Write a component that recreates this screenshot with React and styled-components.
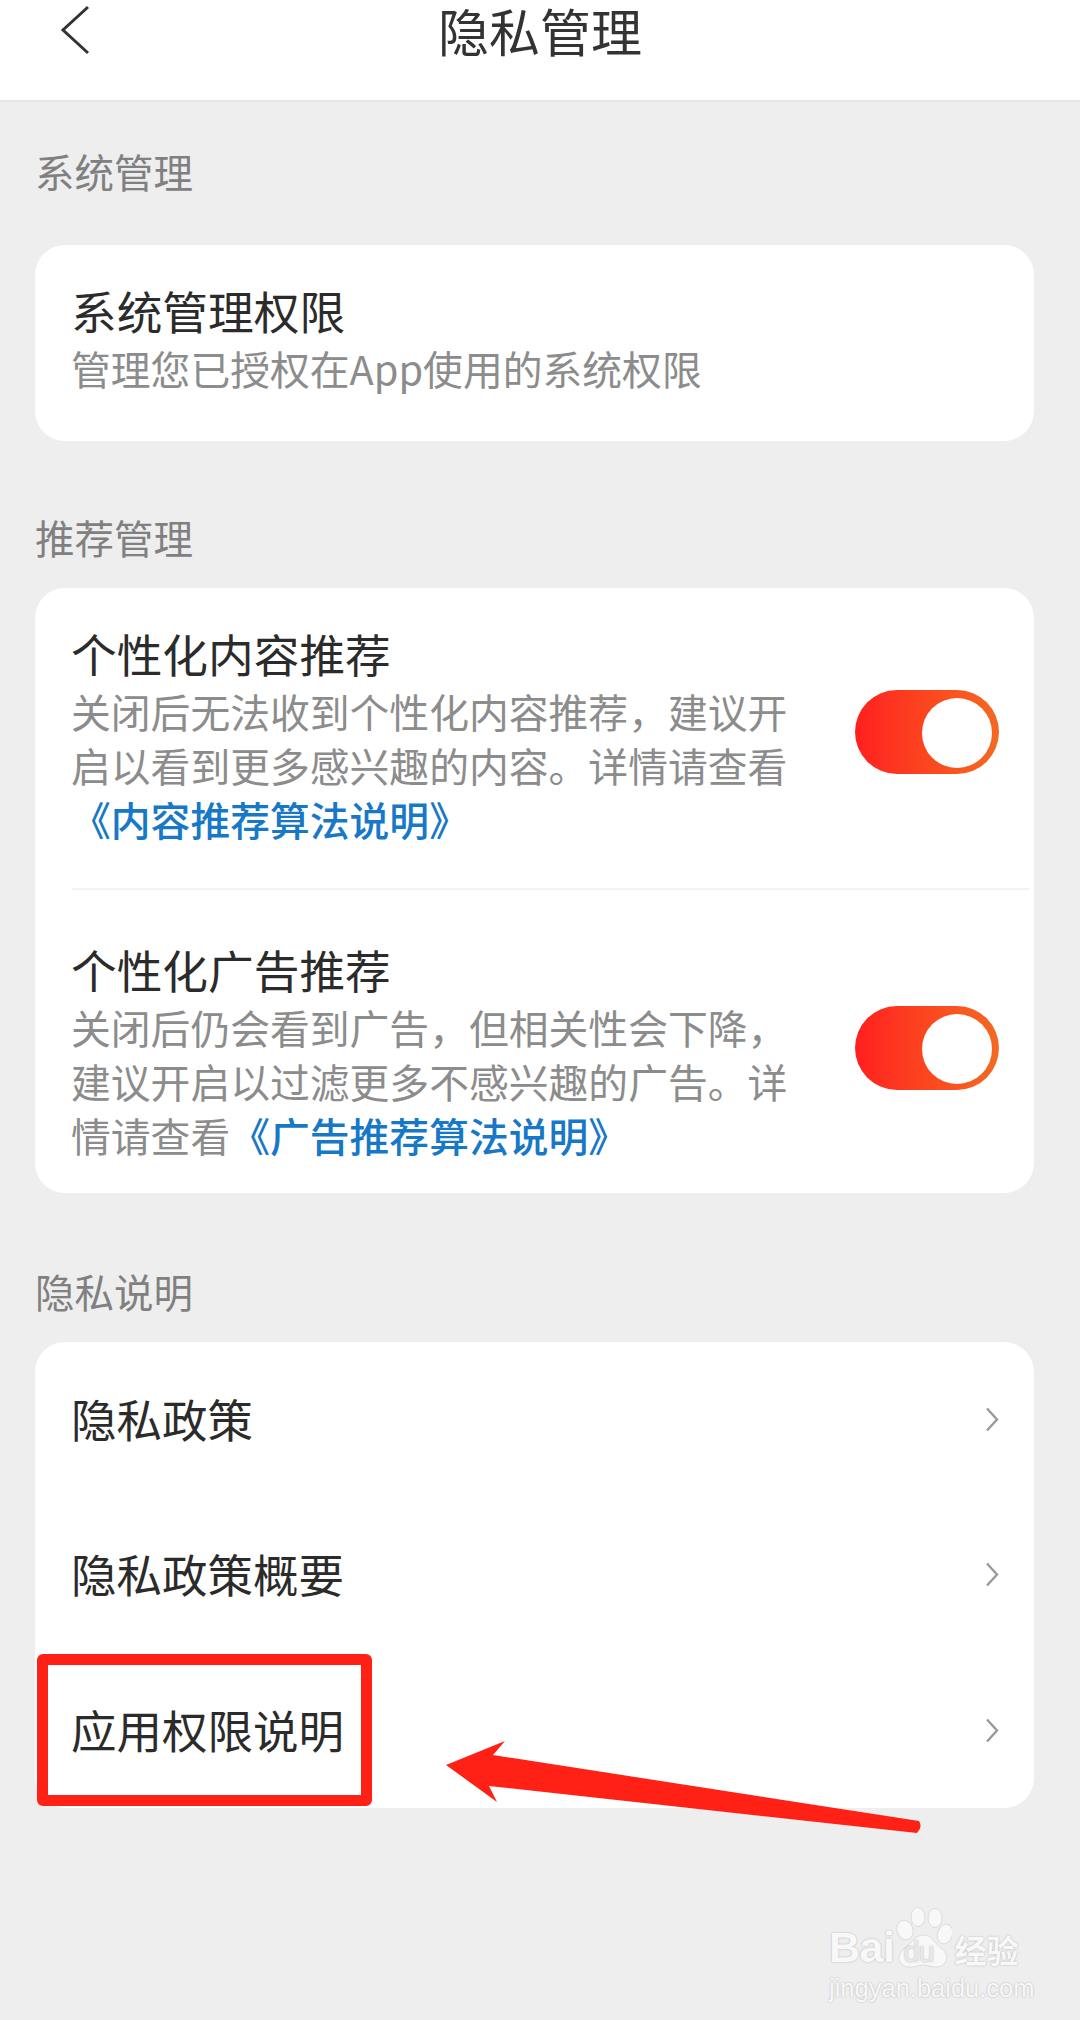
import React from "react";
import styled, { createGlobalStyle } from "styled-components";

const CJK = `"Noto Sans CJK SC", "Noto Sans", sans-serif`;

const Global = createGlobalStyle`
  html, body {
    margin: 0;
    padding: 0;
    background: #eeeeee;
  }
  body {
    font-family: ${CJK};
  }
`;

const Page = styled.div`
  position: relative;
  width: 1080px;
  height: 2020px;
  overflow: hidden;
  background: #eeeeee;
`;

const Header = styled.header`
  position: relative;
  height: 102px;
  background: #fff;
  border-bottom: 2px solid #e6e6e6;
  box-sizing: border-box;
  display: flex;
  justify-content: center;
`;

const BackIcon = styled.svg`
  position: absolute;
  left: 60px;
  top: 5px;
`;

const Title = styled.h1`
  margin: 0;
  font-size: 51px;
  font-weight: 400;
  line-height: 60px;
  color: #333;
`;

const Section = styled.section`
  margin-top: ${(p) => p.$top}px;
  padding: 0 46px 0 35px;
`;

const Label = styled.div`
  margin-bottom: ${(p) => p.$gap}px;
  font-size: 39.5px;
  line-height: 48px;
  color: #808080;
`;

const Card = styled.div`
  background: #fff;
  border-radius: 30px;
  height: ${(p) => p.$height}px;
  box-sizing: border-box;
  display: flex;
  flex-direction: column;
`;

const ToggleRow = styled.div`
  display: flex;
  align-items: center;
  justify-content: space-between;
  padding: ${(p) => (p.$second ? "52px 35px 31px 36px" : "38px 35px 42px 36px")};
`;

const TextBlock = styled.div`
  width: ${(p) => p.$width || 725}px;
`;

const RowTitle = styled.div`
  font-size: 45.7px;
  line-height: 54px;
  color: #2b2b2b;
`;

const Desc = styled.div`
  margin-top: 4px;
  font-size: 39.8px;
  line-height: 54px;
  color: #8c8c8c;
`;

const Link = styled.span`
  display: inline-block;
  color: #1778c8;
  font-weight: 500;
`;

const Divider = styled.div`
  height: 2px;
  margin: 0 5px 0 37px;
  background: #f4f4f4;
`;

const Track = styled.div`
  position: relative;
  flex: none;
  width: 144px;
  height: 84px;
  margin-top: -8px;
  border-radius: 42px;
  background: linear-gradient(90deg, #ff2020 0%, #fb4a1f 55%, #f36a22 100%);
`;

const Knob = styled.div`
  position: absolute;
  right: 7px;
  top: 8px;
  width: 70px;
  height: 70px;
  border-radius: 50%;
  background: #fff;
`;

const LinkRow = styled.div`
  flex: 1;
  display: flex;
  align-items: center;
  justify-content: space-between;
  padding: 0 35px 3px 36px;
  font-size: 45.5px;
  color: #2b2b2b;
`;

const Chevron = styled.svg`
  flex: none;
  margin-top: 3px;
`;

/* red annotations pasted over the screenshot */
const RedBox = styled.div`
  position: absolute;
  left: 37px;
  top: 1654px;
  width: 335px;
  height: 152px;
  box-sizing: border-box;
  border: 11px solid #ff2116;
  border-radius: 6px;
`;

const Arrow = styled.svg`
  position: absolute;
  left: 0;
  top: 1700px;
`;

const Watermark = styled.div`
  position: absolute;
  left: 829px;
  top: 1903px;
  width: 200px;
  color: #f8f8f8;
  text-shadow: 0 0 2px rgba(0, 0, 0, 0.28);
`;

const MarkTop = styled.div`
  display: flex;
  align-items: flex-end;
  height: 66px;
`;

const Bai = styled.span`
  font-family: "Liberation Sans", sans-serif;
  font-weight: 700;
  font-size: 43px;
  line-height: 44px;
  letter-spacing: -0.5px;
`;

const Paw = styled.div`
  position: relative;
  width: 58px;
  height: 62px;
`;

const Du = styled.span`
  position: absolute;
  left: 9px;
  bottom: 2px;
  font-family: "Liberation Sans", sans-serif;
  font-size: 29px;
  line-height: 30px;
  letter-spacing: -1px;
  color: #e9e9e9;
`;

const Jing = styled.span`
  font-weight: 700;
  font-size: 32px;
  line-height: 40px;
  margin-left: 2px;
`;

const MarkUrl = styled.div`
  margin-top: 4px;
  font-family: "Liberation Sans", sans-serif;
  font-size: 25.5px;
  line-height: 30px;
  white-space: nowrap;
`;

function ToggleSwitch() {
  return (
    <Track>
      <Knob />
    </Track>
  );
}

function RowChevron() {
  return (
    <Chevron width="14" height="25" viewBox="0 0 14 25" fill="none">
      <path d="M2 1.5 L12 12.5 L2 23.5" stroke="#9a9a9a" strokeWidth="2.4" />
    </Chevron>
  );
}

export default function App() {
  return (
    <Page>
      <Global />
      <Header>
        <BackIcon width="32" height="52" viewBox="0 0 32 52" fill="none">
          <path d="M28 2 L3 25 L28 48" stroke="#333" strokeWidth="3" />
        </BackIcon>
        <Title>隐私管理</Title>
      </Header>

      <Section $top={45}>
        <Label $gap={50}>系统管理</Label>
        <Card $height={196}>
          <ToggleRow>
            <TextBlock $width={900}>
              <RowTitle>系统管理权限</RowTitle>
              <Desc>管理您已授权在App使用的系统权限</Desc>
            </TextBlock>
          </ToggleRow>
        </Card>
      </Section>

      <Section $top={72}>
        <Label $gap={27}>推荐管理</Label>
        <Card $height={605}>
          <ToggleRow>
            <TextBlock>
              <RowTitle>个性化内容推荐</RowTitle>
              <Desc>
                关闭后无法收到个性化内容推荐，建议开启以看到更多感兴趣的内容。详情请查看
                <Link>《内容推荐算法说明》</Link>
              </Desc>
            </TextBlock>
            <ToggleSwitch />
          </ToggleRow>
          <Divider />
          <ToggleRow $second>
            <TextBlock>
              <RowTitle>个性化广告推荐</RowTitle>
              <Desc>
                关闭后仍会看到广告，但相关性会下降，建议开启以过滤更多不感兴趣的广告。详情请查看
                <Link>《广告推荐算法说明》</Link>
              </Desc>
            </TextBlock>
            <ToggleSwitch />
          </ToggleRow>
        </Card>
      </Section>

      <Section $top={74}>
        <Label $gap={27}>隐私说明</Label>
        <Card $height={466}>
          <LinkRow>
            隐私政策
            <RowChevron />
          </LinkRow>
          <LinkRow>
            隐私政策概要
            <RowChevron />
          </LinkRow>
          <LinkRow>
            应用权限说明
            <RowChevron />
          </LinkRow>
        </Card>
      </Section>

      <RedBox />
      <Arrow width="1080" height="150" viewBox="0 1700 1080 150">
        <path
          d="M446 1765 L505 1741 L493 1755 L919 1821 Q923 1827 917 1833 L489 1786 L497 1802 Z"
          fill="#ff2116"
        />
      </Arrow>

      <Watermark>
        <MarkTop>
          <Bai>Bai</Bai>
          <Paw>
            <svg width="58" height="62" viewBox="0 0 58 62">
              <g fill="#f8f8f8" stroke="#dcdcdc" strokeWidth="1">
                <ellipse cx="11" cy="23" rx="8" ry="10" transform="rotate(-20 11 23)" />
                <ellipse cx="24" cy="10" rx="7" ry="9.5" />
                <ellipse cx="41" cy="11" rx="7" ry="9.5" />
                <ellipse cx="51" cy="27" rx="7.5" ry="10" transform="rotate(18 51 27)" />
                <path d="M30 28 C38 28 40 36 48 42 C57 49 52 60 42 60 C36 60 34 58 29 58 C24 58 20 61 13 60 C4 58 2 48 10 42 C18 36 21 28 30 28 Z" />
              </g>
            </svg>
            <Du>du</Du>
          </Paw>
          <Jing>经验</Jing>
        </MarkTop>
        <MarkUrl>jingyan.baidu.com</MarkUrl>
      </Watermark>
    </Page>
  );
}
